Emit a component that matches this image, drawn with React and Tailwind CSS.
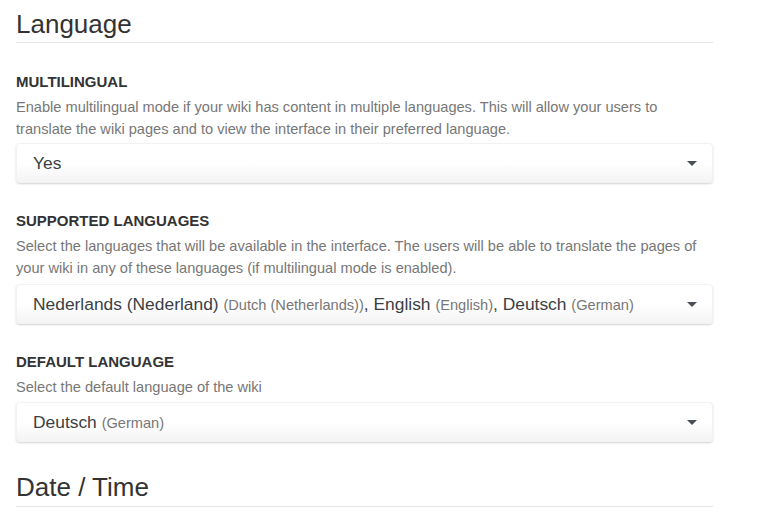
import React from "react";

const Caret = () => (
  <svg width="10" height="5" viewBox="0 0 10 5" className="shrink-0">
    <path d="M0 0 L10 0 L5 5 Z" fill="#4a4f55" />
  </svg>
);

const Select = ({ children }) => (
  <div className="flex h-[40px] items-center justify-between rounded-[4px] border border-[#f2f2f2] bg-gradient-to-b from-white from-50% to-[#f4f4f4] pl-[16px] pr-[15px] shadow-[0_1px_2px_rgba(0,0,0,0.18)]">
    <div className="truncate text-[17.4px] text-[#3a3f44]">{children}</div>
    <Caret />
  </div>
);

const Lang = ({ name, en }) => (
  <>
    {name} <span className="text-[14.6px] text-[#777]">({en})</span>
  </>
);

// top / selectTop are small per-field offsets read off the screenshot
const Field = ({ label, desc, top, selectTop, children }) => (
  <div className={top}>
    <div className="text-[15px] font-bold uppercase leading-[20px] text-[#333]">
      {label}
    </div>
    <p className="mt-[4px] text-[14.6px] leading-[22px] text-[#777]">{desc}</p>
    <div className={selectTop}>{children}</div>
  </div>
);

const Heading = ({ children, pb }) => (
  <div className={`border-b border-[#e5e5e5] ${pb}`}>
    <h2 className="text-[26px] leading-[29px] text-[#333]">{children}</h2>
  </div>
);

export default function App() {
  return (
    <div
      className="min-h-screen bg-white"
      style={{ fontFamily: '"Liberation Sans", Arial, sans-serif' }}
    >
      <div className="ml-[16px] w-[697px] pt-[10px]">
        <Heading pb="pb-[3px]">Language</Heading>

        <Field
          top="mt-[29px]"
          selectTop="mt-[3px]"
          label="Multilingual"
          desc="Enable multilingual mode if your wiki has content in multiple languages. This will allow your users to translate the wiki pages and to view the interface in their preferred language."
        >
          <Select>Yes</Select>
        </Field>

        <Field
          top="mt-[28px]"
          selectTop="mt-[5px]"
          label="Supported Languages"
          desc="Select the languages that will be available in the interface. The users will be able to translate the pages of your wiki in any of these languages (if multilingual mode is enabled)."
        >
          <Select>
            <Lang name="Nederlands (Nederland)" en="Dutch (Netherlands)" />,{" "}
            <Lang name="English" en="English" />,{" "}
            <Lang name="Deutsch" en="German" />
          </Select>
        </Field>

        <Field
          top="mt-[28px]"
          selectTop="mt-[4px]"
          label="Default Language"
          desc="Select the default language of the wiki"
        >
          <Select>
            <Lang name="Deutsch" en="German" />
          </Select>
        </Field>

        <div className="mt-[31px]">
          <Heading pb="pb-[4px]">Date / Time</Heading>
        </div>
      </div>
    </div>
  );
}
